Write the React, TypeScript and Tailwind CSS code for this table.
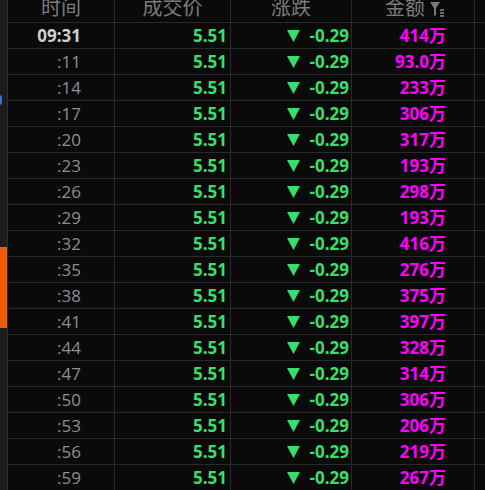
import React from "react";

const rows = [
  { t: "09:31", a: "414万", first: true },
  { t: ":11", a: "93.0万" },
  { t: ":14", a: "233万" },
  { t: ":17", a: "306万" },
  { t: ":20", a: "317万" },
  { t: ":23", a: "193万" },
  { t: ":26", a: "298万" },
  { t: ":29", a: "193万" },
  { t: ":32", a: "416万" },
  { t: ":35", a: "276万" },
  { t: ":38", a: "375万" },
  { t: ":41", a: "397万" },
  { t: ":44", a: "328万" },
  { t: ":47", a: "314万" },
  { t: ":50", a: "306万" },
  { t: ":53", a: "206万" },
  { t: ":56", a: "219万" },
  { t: ":59", a: "267万" },
];

function FilterIcon() {
  return (
    <svg width="16" height="17" viewBox="0 0 16 17" className="ml-[4px] mt-[1px]">
      <path d="M1 1h10l-4 6v7l-2 1V7z" fill="#7a7a7a" />
      <rect x="11" y="8" width="4" height="2" fill="#6a6a6a" />
      <rect x="11" y="11" width="4" height="2" fill="#6a6a6a" />
      <rect x="11" y="14" width="4" height="2" fill="#6a6a6a" />
    </svg>
  );
}

function Down() {
  return (
    <svg width="13" height="12" viewBox="0 0 13 12" className="mr-[10px]">
      <path d="M0 0h13L6.5 12z" fill="#38df6a" />
    </svg>
  );
}

export default function App() {
  return (
    <div
      className="flex h-[490px] w-[485px] overflow-hidden bg-[#0a0a0a]"
      style={{ fontFamily: '"Open Sans", "Noto Sans CJK SC", sans-serif' }}
    >
      {/* left edge strip */}
      <div className="relative w-[8px] shrink-0 border-r border-[#2e2e2e] bg-[#1c1c1c]">
        <div className="absolute left-[-3px] top-[95px] h-[10px] w-[5px] rounded-full border-2 border-[#3b6fd6]" />
        <div className="absolute left-0 top-[247px] h-[81px] w-[7px] bg-[#f25c05]" />
      </div>

      <div className="flex-1">
        {/* header */}
        <div className="grid h-[23px] grid-cols-[107px_116px_121px_123px_1fr] border-b border-[#2a2a2a] text-[20px] leading-[20px] text-[#7c7c7c]">
          <div className="flex items-start justify-center overflow-hidden border-r border-[#2a2a2a]">
            <span className="-mt-[2px]">时间</span>
          </div>
          <div className="flex items-start justify-center overflow-hidden border-r border-[#2a2a2a]">
            <span className="-mt-[2px]">成交价</span>
          </div>
          <div className="flex items-start justify-center overflow-hidden border-r border-[#2a2a2a]">
            <span className="-mt-[2px]">涨跌</span>
          </div>
          <div className="flex items-start justify-center overflow-hidden border-r border-[#2a2a2a] pl-[4px]">
            <span className="-mt-[2px]">金额</span>
            <FilterIcon />
          </div>
          <div />
        </div>

        {rows.map((r) => (
          <div
            key={r.t}
            className="grid h-[26px] grid-cols-[107px_116px_121px_123px_1fr] border-b border-[#2a2a2a] text-[17px] leading-[20px]"
          >
            <div
              className={`flex items-center justify-end border-r border-[#2a2a2a] pr-[33px] ${
                r.first ? "font-bold text-[#cfcfcf]" : "text-[#8b8f96]"
              }`}
            >
              {r.t}
            </div>
            <div className="flex items-center justify-end border-r border-[#2a2a2a] pr-[3px] font-bold text-[#38df6a]">
              5.51
            </div>
            <div className="flex items-center justify-end border-r border-[#2a2a2a] pr-[2px] font-bold text-[#38df6a]">
              <Down />
              -0.29
            </div>
            <div className="flex items-center justify-end border-r border-[#2a2a2a] pr-[28px] font-bold text-[#ff00ff]">
              {r.a}
            </div>
            <div />
          </div>
        ))}
      </div>
    </div>
  );
}
